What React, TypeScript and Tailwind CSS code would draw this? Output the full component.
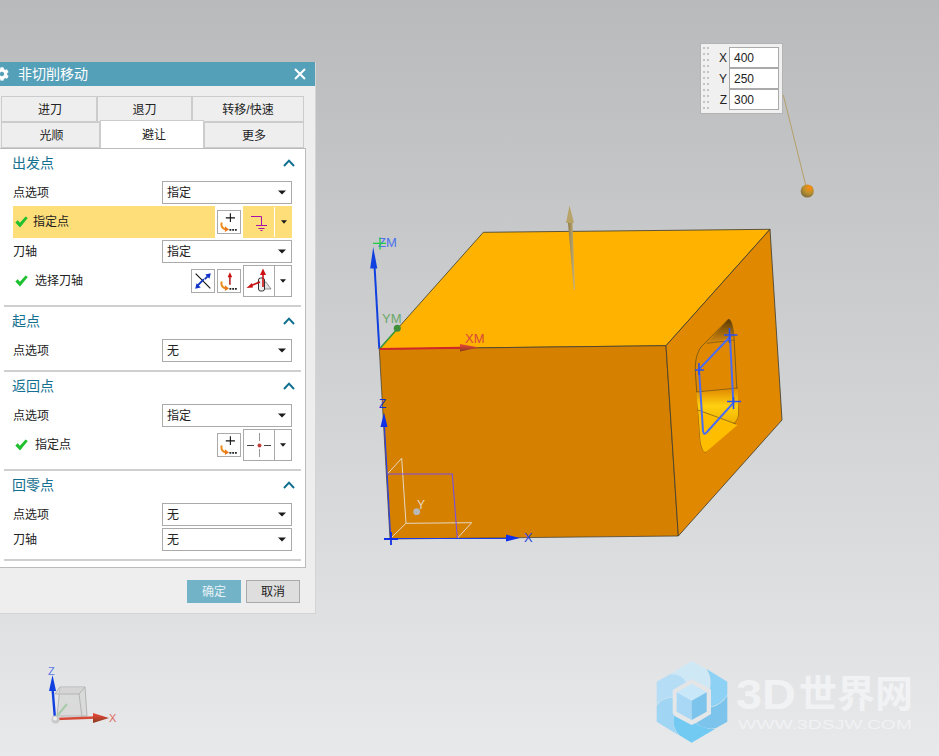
import React from "react";
import { FaCog } from "react-icons/fa";

const Caret = () => (
  <svg width="8" height="5" viewBox="0 0 8 5"><path d="M0 0.5H8L4 4.5Z" fill="#1a1a1a" /></svg>
);
const SmallCaret = () => (
  <svg width="6" height="4" viewBox="0 0 6 4"><path d="M0 0.3H6L3 3.7Z" fill="#1a1a1a" /></svg>
);
const Select = ({ value }: { value: string }) => (
  <div className="flex h-[23px] w-[130px] items-center justify-between border border-[#aaaaaa] bg-white pl-[4px] pr-[5px] text-[12px]">
    <span>{value}</span>
    <Caret />
  </div>
);
const Check = () => (
  <svg width="13" height="12" viewBox="0 0 13 12" className="shrink-0">
    <path d="M0.3 6.4L2.8 4.2L4.9 6.8L10.6 0.6L12.8 2L5 11.6Z" fill="#1fc02f" />
  </svg>
);
const Chevron = () => (
  <svg width="12" height="8" viewBox="0 0 12 8"><path d="M1 7L6 1.6L11 7" fill="none" stroke="#0f6f8f" strokeWidth="2" /></svg>
);
const OrangeHook = () => (
  <g>
    <path d="M4 12.5C2.8 16.5 5 19.5 8.5 20" fill="none" stroke="#ec8a1c" strokeWidth="2.2" />
    <path d="M7.5 16.5L12 20.2L7.5 23Z" fill="#e8781a" />
  </g>
);
const Dots = () => (
  <path d="M12.5 19.5h2v2h-2zM15.5 19.5h2v2h-2zM18.5 19.5h2v2h-2z" fill="#222" />
);
const PointBtn = () => (
  <div className="flex h-[24px] w-[24px] shrink-0 border border-[#aaaaaa] bg-white">
    <svg width="22" height="22" viewBox="0 0 24 24">
      <path d="M13.5 2.5V12M8.5 7.5H18.5" stroke="#111" strokeWidth="1.2" />
      <OrangeHook />
      <Dots />
    </svg>
  </div>
);
const AxisBtn = () => (
  <div className="flex h-[24px] w-[24px] shrink-0 border border-[#aaaaaa] bg-white">
    <svg width="22" height="22" viewBox="0 0 24 24">
      <path d="M13 7V16" stroke="#aa1111" strokeWidth="1.6" />
      <path d="M13 2.5L15.5 8H10.5Z" fill="#cc1111" />
      <OrangeHook />
      <Dots />
    </svg>
  </div>
);
const ReverseBtn = () => (
  <div className="flex h-[24px] w-[24px] shrink-0 border border-[#aaaaaa] bg-white">
    <svg width="22" height="22" viewBox="0 0 24 24">
      <path d="M4 4L20 20" stroke="#111" strokeWidth="1.2" />
      <path d="M6 17L13 10" stroke="#1133bb" strokeWidth="2" />
      <path d="M3.5 20.5L5 14.5L9.5 19Z" fill="#1133cc" />
      <path d="M14 10L17 7" stroke="#1133bb" strokeWidth="2" />
      <path d="M20.5 3.5L19 9.5L14.5 5Z" fill="#1133cc" />
    </svg>
  </div>
);
const Split = ({ children, hot }: { children: React.ReactNode; hot?: boolean }) => (
  <div className={hot ? "flex h-[32px] w-[49px] shrink-0 bg-[#fede79] py-[1px]" : "flex h-[32px] w-[49px] shrink-0 border border-[#aaaaaa] bg-white"}>
    <div className={hot ? "flex w-[31px] items-center justify-center" : "flex w-[30px] items-center justify-center"}>{children}</div>
    <div className={hot ? "flex flex-1 items-center justify-center border-l border-white" : "flex flex-1 items-center justify-center border-l border-[#aaaaaa]"}>
      <SmallCaret />
    </div>
  </div>
);
const Row = ({ label, value }: { label: string; value: string }) => (
  <div className="flex h-[23px] items-center justify-between pl-[13px] pr-[13px]">
    <span>{label}</span>
    <Select value={value} />
  </div>
);
const Title = ({ text }: { text: string }) => (
  <div className="mb-[4px] flex h-[28px] items-center justify-between pl-[12px] pr-[10px] text-[14px] text-[#14708f]">
    <span>{text}</span>
    <Chevron />
  </div>
);
const Section = ({ title, children }: { title: string; children: React.ReactNode }) => (
  <section>
    <Title text={title} />
    <div className="flex flex-col gap-[2px] pb-[8px]">{children}</div>
    <div className="ml-[4px] h-[2px] w-[297px] bg-[#cfcfcf]" />
  </section>
);
const Tab = ({ label, w, active }: { label: string; w: string; active?: boolean }) => (
  <div
    className={
      active
        ? `${w} relative z-10 -mt-[2px] flex h-[28px] items-center justify-center border border-b-0 border-[#cccccc] bg-white`
        : `${w} flex h-[26px] items-center justify-center border border-[#cccccc] bg-[#eeeeee] pt-[1px]`
    }
  >
    {label}
  </div>
);

const Dialog = () => (
  <div className="absolute left-0 top-[62px] h-[552px] w-[316px] border-b border-r border-[#d4d4d4] bg-[#eeeeee] font-['Liberation_Sans','Noto_Sans_CJK_SC',sans-serif] text-[12px] text-[#222222]">
    <div className="flex h-[24px] items-center bg-[#55a0b9] pr-[9px] text-[14px] text-white">
      <FaCog className="-ml-[5px] shrink-0" size={14} />
      <span className="ml-[9px] flex-1">非切削移动</span>
      <svg width="12" height="12" viewBox="0 0 12 12"><path d="M1 1L11 11M11 1L1 11" stroke="#fff" strokeWidth="2" /></svg>
    </div>
    <div className="ml-[1px] mt-[10px] flex">
      <Tab label="进刀" w="w-[96px] pl-[2px]" />
      <Tab label="退刀" w="w-[95px]" />
      <Tab label="转移/快速" w="w-[112px]" />
    </div>
    <div className="ml-[1px] flex">
      <Tab label="光顺" w="w-[99px] pl-[2px]" />
      <Tab label="避让" w="w-[104px] pl-[4px]" active />
      <Tab label="更多" w="w-[100px]" />
    </div>
    <div className="h-[420px] w-[306px] border-y border-r border-[#bbbbbb] bg-white">
      <Section title="出发点">
        <Row label="点选项" value="指定" />
        <div className="ml-[13px] flex h-[32px] w-[279px] items-center gap-[2px]">
          <div className="flex h-full flex-1 items-center gap-[5px] bg-[#fede79] pl-[2px]">
            <Check />
            <span>指定点</span>
          </div>
          <PointBtn />
          <Split hot>
            <svg width="19" height="20" viewBox="0 0 19 20">
              <path d="M2 4.5H12.5V13.5M7 13.5H18M9.5 16.5H15.5M11.5 18.5H13.5" fill="none" stroke="#aa10aa" strokeWidth="1" />
            </svg>
          </Split>
        </div>
        <Row label="刀轴" value="指定" />
        <div className="flex h-[32px] items-center gap-[2px] pl-[15px] pr-[13px]">
          <Check />
          <span className="ml-[5px] flex-1">选择刀轴</span>
          <ReverseBtn />
          <AxisBtn />
          <Split>
            <svg width="28" height="28" viewBox="0 0 28 28">
              <path d="M12 15L17 22H26L21 15Z" fill="#e2e2e2" stroke="#555" strokeWidth="0.6" />
              <rect x="13.5" y="11" width="6" height="13" rx="2" fill="#eeeeee" stroke="#333" strokeWidth="1" />
              <path d="M18 20V7" stroke="#cc1111" strokeWidth="1.6" />
              <path d="M18 1.5L21 8H15Z" fill="#cc1111" />
              <path d="M15 15L5 19" stroke="#cc1111" strokeWidth="1.6" />
              <path d="M1.5 21L7 16L8 20.5Z" fill="#cc1111" />
            </svg>
          </Split>
        </div>
      </Section>
      <Section title="起点">
        <Row label="点选项" value="无" />
      </Section>
      <Section title="返回点">
        <Row label="点选项" value="指定" />
        <div className="flex h-[32px] items-center gap-[2px] pl-[15px] pr-[13px]">
          <Check />
          <span className="ml-[5px] flex-1">指定点</span>
          <PointBtn />
          <Split>
            <svg width="26" height="24" viewBox="0 0 26 24">
              <path d="M1 12.5H8M18 12.5H25" stroke="#444" strokeWidth="1" />
              <path d="M13.5 0V8M13.5 16V24" stroke="#999" strokeWidth="1" />
              <circle cx="13.5" cy="12.5" r="2" fill="#c04040" />
            </svg>
          </Split>
        </div>
      </Section>
      <Section title="回零点">
        <Row label="点选项" value="无" />
        <Row label="刀轴" value="无" />
      </Section>
    </div>
    <div className="mt-[12px] flex gap-[5px] pl-[187px]">
      <div className="flex h-[23px] w-[54px] items-center justify-center bg-[#73b3c8] text-[#e6f2f6]">确定</div>
      <div className="flex h-[23px] w-[54px] items-center justify-center border border-[#aaaaaa] bg-[#dedede]">取消</div>
    </div>
  </div>
);

const Coord = ({ axis, value }: { axis: string; value: string }) => (
  <div className="flex items-center">
    <span className="w-[24px] pr-[2px] text-right">{axis}</span>
    <div className="flex h-[21px] w-[50px] items-center border border-[#aaaaaa] bg-white pl-[4px]">{value}</div>
  </div>
);
const CoordBox = () => (
  <div className="absolute left-[700px] top-[43px] flex h-[71px] w-[83px] border border-[#b4b4b4] bg-[#f0f0f0] py-[3px] pl-[2px] font-['Liberation_Sans',sans-serif] text-[12px] text-[#222222]">
    <div className="grid h-[62px] w-[6px] grid-cols-2 content-between gap-x-[1px]">
      {Array.from({ length: 22 }).map((_, i) => (
        <div key={i} className="h-[2px] w-[2px] bg-[#c4c4c4]" />
      ))}
    </div>
    <div className="-ml-[4px] flex flex-col">
      <Coord axis="X" value="400" />
      <Coord axis="Y" value="250" />
      <Coord axis="Z" value="300" />
    </div>
  </div>
);

const Scene = () => (
  <svg className="absolute inset-0" width="939" height="756" viewBox="0 0 939 756" fontFamily="'Liberation Sans',sans-serif">
    <defs>
      <linearGradient id="holeTop" x1="0" y1="0" x2="0" y2="1">
        <stop offset="0" stopColor="#5a3a05" />
        <stop offset="1" stopColor="#d68a10" />
      </linearGradient>
      <linearGradient id="holeMid" x1="0" y1="0" x2="0" y2="1">
        <stop offset="0" stopColor="#e08800" />
        <stop offset="0.5" stopColor="#ffd010" />
        <stop offset="1" stopColor="#f0b000" />
      </linearGradient>
      <radialGradient id="ball" cx="0.65" cy="0.25" r="0.85">
        <stop offset="0" stopColor="#ff8c10" />
        <stop offset="0.5" stopColor="#b8902f" />
        <stop offset="1" stopColor="#75663c" />
      </radialGradient>
      <linearGradient id="shaft" x1="0" y1="0" x2="1" y2="0">
        <stop offset="0" stopColor="#8f7c48" />
        <stop offset="1" stopColor="#c8b47c" />
      </linearGradient>
      <linearGradient id="redArrow" x1="0" y1="0" x2="0" y2="1">
        <stop offset="0" stopColor="#f04a3a" />
        <stop offset="1" stopColor="#8a3a20" />
      </linearGradient>
    </defs>

    {/* block */}
    <path d="M483.3 232.3L770 229.3L666 345.7L379.3 349Z" fill="#ffb300" stroke="#3a3a30" strokeWidth="0.8" />
    <path d="M379.3 349L666 345.7L678.3 536L390 539Z" fill="#d68000" stroke="#3a3a30" strokeWidth="0.7" />
    <path d="M666 345.7L770 229.3L782 420L678.3 536Z" fill="#e08800" stroke="#3a3a30" strokeWidth="0.8" />

    {/* hole */}
    <path d="M728.3 319.3C731 319 733 326 734 337L738 410C738.5 416 737.5 419 735 422L706 452C703.5 453 701.5 447 700.5 442L695.3 372C695 360 697 353 701 347Z" fill="#e08800" stroke="#5a4a20" strokeWidth="0.7" />
    <path d="M728.3 319.3C731 319 733 326 734 337L706.7 343.3Z" fill="url(#holeTop)" />
    <path d="M696 392L738 388L738 410C738.5 416 737.5 419 735 422L733 424L698 410Z" fill="url(#holeMid)" />
    <path d="M698 410L737.5 425L706 452C703.5 453 701.5 447 700.5 442Z" fill="#ffbd00" />
    <path d="M706.7 343.3L734 340M696 392L738 388M698 410L736 424" stroke="#5a4a20" strokeWidth="0.6" fill="none" />
    <path d="M730 336.7L699 369.3L703 431Q704 436 707 432L733.3 403Z" fill="none" stroke="#4a6cf0" strokeWidth="2" />
    <path d="M729.5 328V343M724 335H737.5M699 363V375M695 370H704M733.5 397V409M727 401.5H741" stroke="#2a50f0" strokeWidth="1.6" />

    {/* vector */}
    <path d="M568 223H572.5L575 289.5H573.7Z" fill="url(#shaft)" />
    <path d="M569.5 205.5L574 223H566Z" fill="#b8a468" />

    {/* work triad */}
    <path d="M379.3 349L374.3 262" stroke="#1040e0" strokeWidth="2" />
    <path d="M373.2 247L377.3 268.5H370.2Z" fill="#1040e0" />
    <text x="378" y="247" fontSize="13" fill="#4a72ee">ZM</text>
    <path d="M380 237.5V249.5M373 243.4H386" stroke="#22cc44" strokeWidth="1.3" />
    <path d="M379.5 349L398 328" stroke="#3a9a3a" strokeWidth="1.6" />
    <circle cx="397.3" cy="328.3" r="3.5" fill="#3f8f3a" />
    <text x="382" y="323" fontSize="13" fill="#6aa86a">YM</text>
    <path d="M379.5 349L462 347.8" stroke="#d02828" strokeWidth="2" />
    <path d="M479 347.5L460 344V351.5Z" fill="url(#redArrow)" />
    <text x="465" y="343" fontSize="13" fill="#d84a3a">XM</text>

    {/* wcs */}
    <path d="M387.3 474L401.7 458.3L406 523.3L471.7 522.7L457.3 538.3M406 523.3L390.7 538.3" fill="none" stroke="#e6d8c4" strokeWidth="1" />
    <path d="M387.3 474H452.3L457.3 538.3" fill="none" stroke="#7a4fe0" strokeWidth="1.1" />
    <path d="M390.7 539L384.3 424" stroke="#2a40e8" strokeWidth="1.2" />
    <path d="M384 412.5L387.5 427H380.5Z" fill="#1030e8" />
    <text x="379" y="408" fontSize="12" fill="#1030d8">Z</text>
    <path d="M391 538.5H508" stroke="#1c3ce8" strokeWidth="1.2" />
    <path d="M520 538L506 534.5V541.5Z" fill="#1030e8" />
    <text x="524" y="542" fontSize="13" fill="#2a44e0">X</text>
    <path d="M391 532V545M384 539H398" stroke="#1030e8" strokeWidth="1.8" />
    <circle cx="416.7" cy="511.7" r="3.4" fill="#b8b8b8" />
    <text x="417" y="509" fontSize="12" fill="#e6d8c4">Y</text>

    {/* handle */}
    <path d="M783.3 95L805.7 185" stroke="#b5a06a" strokeWidth="1" />
    <circle cx="807.3" cy="191" r="6.6" fill="url(#ball)" />

    {/* view triad */}
    <g fill="#d2d2d2" fillOpacity="0.6" stroke="#b4b4b4" strokeWidth="1">
      <path d="M60 687H85L87 716H57Z" />
      <path d="M60 687L55 694H79L85 687" />
      <path d="M79 694L82 717" />
    </g>
    <path d="M55 719L52.5 688" stroke="#1040e0" strokeWidth="2.4" />
    <path d="M52.5 675L56 691H49Z" fill="#1040e0" />
    <text x="48" y="675" fontSize="11" fill="#5a78e8">Z</text>
    <path d="M57 716L67 704" stroke="#a8cca8" strokeWidth="2" />
    <path d="M56 719L96 717.5" stroke="#d64a3a" strokeWidth="2.6" />
    <path d="M109 718L93 713V723Z" fill="url(#redArrow)" />
    <text x="109" y="722" fontSize="11" fill="#e06a60">X</text>
    <circle cx="55.5" cy="719.5" r="4" fill="#c8c8c8" />
    <circle cx="55" cy="718.5" r="2" fill="#f0f0f0" />

    {/* watermark */}
    <g transform="translate(650 655) scale(0.3333)">
      <path d="M60 58L125 18L168 42Q185 70 178 100L125 72L108 82Q90 55 60 58Z" fill="#cfe8f6" />
      <path d="M20 80L60 58Q95 55 108 82L68 105V125Q35 128 20 150Z" fill="#b5def6" />
      <path d="M20 152Q35 130 68 127V175L72 180Q65 215 85 240L20 200Z" fill="#a0d5f4" />
      <path d="M72 182L125 210L135 205Q170 225 195 222L125 263L87 240Q65 215 72 182Z" fill="#72caf3" />
      <path d="M137 205L183 177V157Q215 150 232 122V200L197 220Q165 225 137 205Z" fill="#7cc4ec" />
      <path d="M170 42L232 80V120Q215 148 183 155V105L180 100Q187 70 170 42Z" fill="#8dd2f4" />
      <path d="M125 87L170 112L125 137L80 112Z" fill="#c8e7f9" />
      <path d="M80 112L125 137V195L80 170Z" fill="#a8d8f5" />
      <path d="M170 112L125 137V195L170 170Z" fill="#7cc4ec" />
    </g>
    <text x="736" y="709" fontSize="43" fontWeight="700" fill="#f1f2f4" textLength="60" lengthAdjust="spacingAndGlyphs" fontFamily="'Liberation Sans',sans-serif">3D</text>
    <text x="799" y="707" fontSize="38" fontWeight="700" fill="#f1f2f4" textLength="114" lengthAdjust="spacingAndGlyphs" fontFamily="'Noto Sans CJK SC',sans-serif">世界网</text>
    <text x="738" y="729" fontSize="12" fontWeight="400" fill="#f1f2f4" textLength="174" lengthAdjust="spacingAndGlyphs">WWW.3DSJW.COM</text>
  </svg>
);

export default function App() {
  return (
    <div className="relative h-[756px] w-[939px] overflow-hidden bg-linear-to-b from-[#b9babc] to-[#e8e9eb]">
      <Scene />
      <CoordBox />
      <Dialog />
    </div>
  );
}
